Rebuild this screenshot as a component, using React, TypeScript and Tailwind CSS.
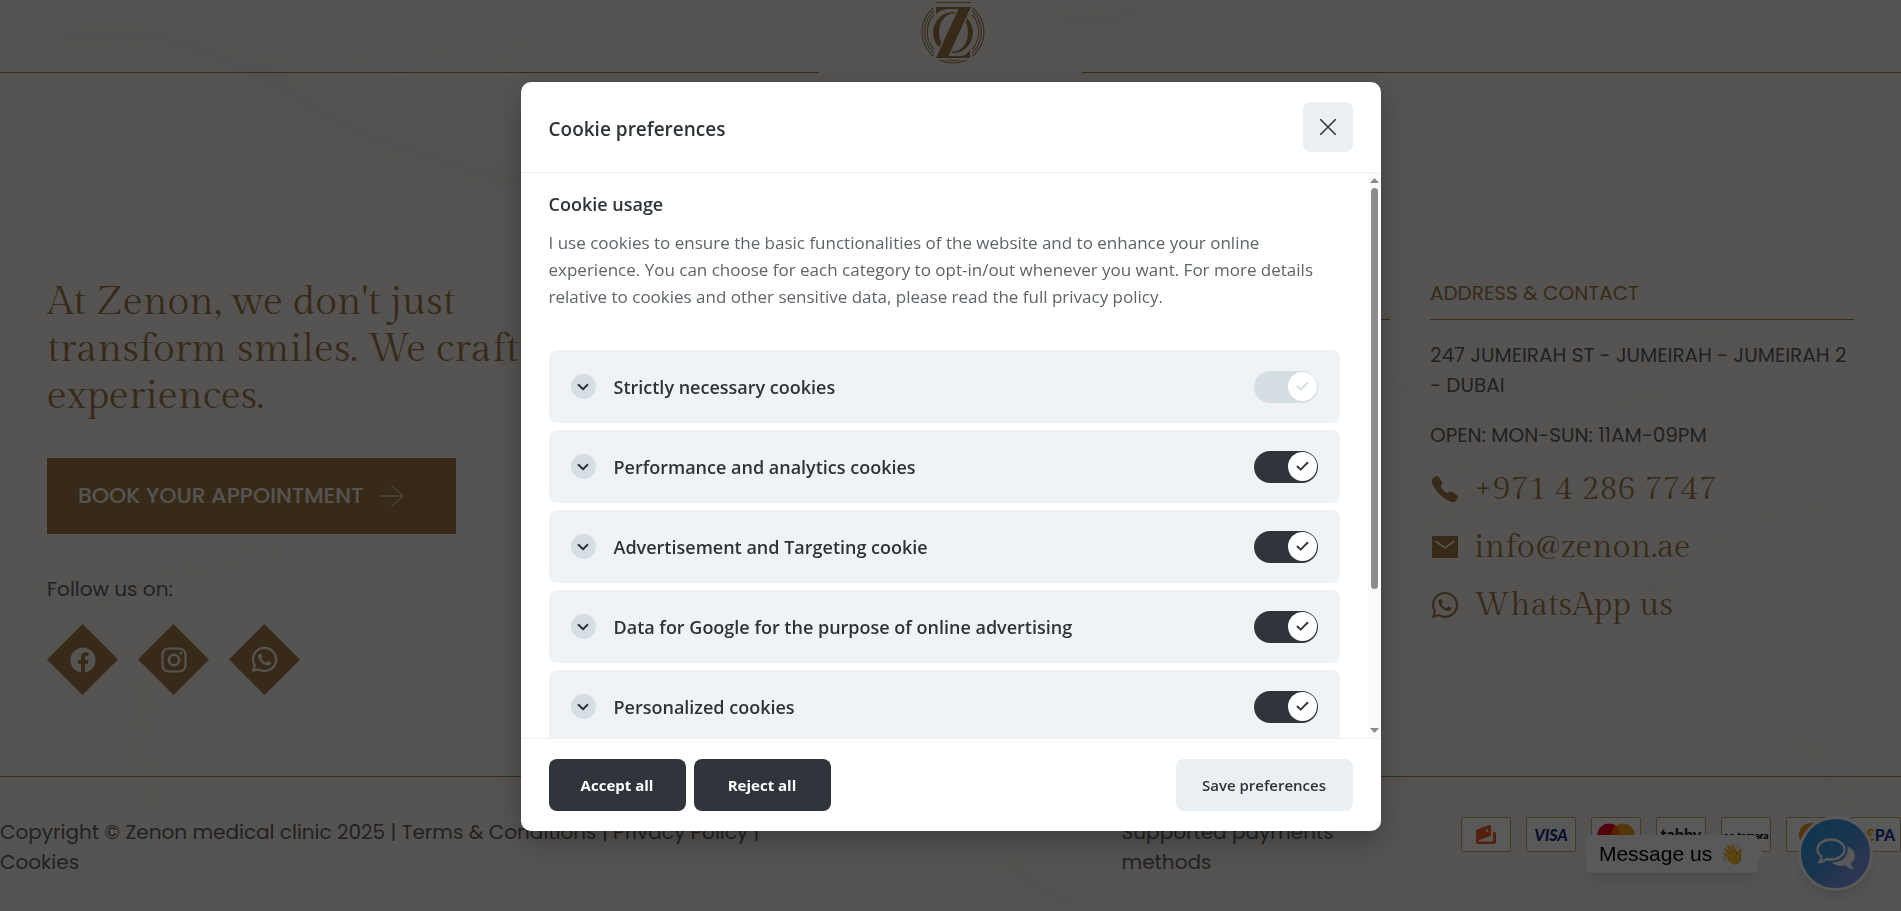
import { useState } from 'react'
import { Check, ChevronDown } from 'lucide-react'
import { FaFacebook, FaWhatsapp } from 'react-icons/fa'
import { IoCall } from 'react-icons/io5'

interface Category {
  id: string
  label: string
  locked?: boolean
}

const CATEGORIES: Category[] = [
  { id: 'necessary', label: 'Strictly necessary cookies', locked: true },
  { id: 'analytics', label: 'Performance and analytics cookies' },
  { id: 'targeting', label: 'Advertisement and Targeting cookie' },
  { id: 'google', label: 'Data for Google for the purpose of online advertising' },
  { id: 'personalized', label: 'Personalized cookies' },
]

function ZenonLogo() {
  return (
    <svg viewBox="0 0 64 64" className="size-16" role="img" aria-label="Zenon">
      <defs>
        <clipPath id="rings">
          <path d="M0 0H13V64H0ZM51 0H64V64H51ZM13 59.5H51V64H13Z" />
        </clipPath>
      </defs>
      <g clipPath="url(#rings)" fill="none" stroke="#9e7a45" strokeWidth="1.1">
        <circle cx="32" cy="32" r="31" />
        <circle cx="32" cy="32" r="28.4" />
        <circle cx="32" cy="32" r="25.8" />
      </g>
      <path d="M15 2.5H50" stroke="#9e7a45" strokeWidth="1" />
      <path
        fill="#9e7a45"
        fillRule="evenodd"
        d="M32 12a20 20.5 0 1 0 0 41a20 20.5 0 1 0 0 -41ZM32.500 13.500a14.500 19 0 1 1 0 38a14.500 19 0 1 1 0 -38Z"
      />
      <path
        d="M15 7H50L27.500 56H40Q47 55 49 49V58H15L37.500 9H26Q17 10 15 15Z"
        fill="#9e7a45"
        stroke="#f6f1ec"
        strokeWidth="3"
        paintOrder="stroke"
      />
    </svg>
  )
}

function InstagramIcon() {
  return (
    <svg viewBox="0 0 26 26" className="size-[26px]" fill="none" stroke="currentColor" aria-hidden="true">
      <rect x="1.5" y="1.500" width="23" height="23" rx="6" strokeWidth="2.200" />
      <circle cx="13" cy="13" r="5.200" strokeWidth="2.600" />
      <circle cx="19.800" cy="6" r="1.500" fill="currentColor" stroke="none" />
    </svg>
  )
}

function MailIcon() {
  return (
    <svg viewBox="0 0 26 22" className="w-[26px] h-[22px]" aria-hidden="true">
      <rect width="26" height="22" fill="currentColor" />
      <path d="M3.500 5L13 12L22.500 5" fill="none" stroke="#f6f1ec" strokeWidth="1.600" />
    </svg>
  )
}

function MarbleVeins() {
  return (
    <svg
      viewBox="0 0 1901 911"
      preserveAspectRatio="none"
      className="absolute inset-0 size-full opacity-10 blur-[6px]"
      fill="none"
      stroke="#98a696"
      strokeWidth="13"
      aria-hidden="true"
    >
      <path d="M60 38C130 28 190 40 230 62C300 90 330 130 400 145C450 165 480 178 540 182" />
      <path d="M260 68C350 75 430 66 520 48" strokeWidth="9" />
      <path d="M1720 330C1660 380 1620 430 1580 450C1520 480 1470 490 1440 530" strokeWidth="8" />
      <path d="M1400 380C1450 440 1480 490 1540 500C1600 510 1620 560 1650 590C1720 560 1760 520 1820 505" strokeWidth="9" />
      <path d="M95 600C140 590 180 560 280 550" strokeWidth="7" />
      <path d="M145 680C142 730 150 770 152 810" strokeWidth="6" />
      <path d="M1060 20C1090 30 1110 20 1140 10" />
      <path d="M1000 860C1030 880 1050 900 1090 911" />
      <path d="M1800 740C1830 790 1850 810 1901 820" strokeWidth="8" />
    </svg>
  )
}

const SOCIALS = [
  { name: 'Facebook', icon: <FaFacebook size={26} /> },
  { name: 'Instagram', icon: <InstagramIcon /> },
  { name: 'WhatsApp', icon: <FaWhatsapp size={29} /> },
]

const CONTACTS = [
  { text: '+971 4 286 7747', href: 'tel:+97142867747', icon: <IoCall size={30} /> },
  { text: 'info@zenon.ae', href: 'mailto:info@zenon.ae', icon: <MailIcon /> },
  { text: 'WhatsApp us', href: '#whatsapp', icon: <FaWhatsapp size={30} /> },
]

function PaymentCard({ children }: { children: React.ReactNode }) {
  return (
    <li className="flex h-[35px] w-[50px] items-center justify-center overflow-hidden rounded-xs border border-[#c4a77d] bg-white">
      {children}
    </li>
  )
}

function Payments() {
  return (
    <ul className="flex shrink-0 gap-[15px] font-['Lato',sans-serif]">
      <PaymentCard>
        <svg viewBox="0 0 20 20" className="size-5" fill="#f0602c" aria-label="Wallet">
          <path d="M0 6Q0 5 1 4.600L13 0Q15 -.5 15 1.500V10Q15 11 14 11.500L3 15.500V16.500H16Q17 16.500 17 15.500V7H18.500Q20 7 20 8.500V17Q20 19 18 19H2Q0 19 0 17Z" />
          <circle cx="11" cy="5.500" r="1.300" fill="#fff" />
          <path d="M3 15.800L14 11.800Q15.500 11 15.500 9.500V6" fill="none" stroke="#fff" strokeWidth="1" />
        </svg>
      </PaymentCard>
      <PaymentCard>
        <span className="text-base font-black italic text-[#1a2a80]">VISA</span>
      </PaymentCard>
      <PaymentCard>
        <svg viewBox="0 0 38 24" className="h-6 w-[38px]" aria-label="Mastercard">
          <circle cx="12" cy="12" r="11.500" fill="#eb001b" />
          <circle cx="26" cy="12" r="11.500" fill="#f79e1b" />
          <path d="M19 3A11.500 11.500 0 0 1 19 21A11.500 11.500 0 0 1 19 3Z" fill="#ff5f00" />
        </svg>
      </PaymentCard>
      <PaymentCard>
        <span className="text-base leading-4 font-black text-[#292929]">tabby</span>
      </PaymentCard>
      <PaymentCard>
        <span className="text-[10px] font-black whitespace-nowrap text-black">•• tamara</span>
      </PaymentCard>
      <PaymentCard>
        <span className="size-6 rounded-full bg-[#f7931a]" />
      </PaymentCard>
      <PaymentCard>
        <span className="text-base font-black text-[#1a3a9a]">
          S<span className="text-[#e6b800]">€</span>PA
        </span>
      </PaymentCard>
    </ul>
  )
}

function ChatWidget() {
  return (
    <div className="fixed right-7 bottom-5 flex items-center gap-10">
      <p className="relative rounded-md bg-white px-[13px] py-1 font-['Liberation_Sans',sans-serif] text-[21px] text-black shadow-lg">
        Message us <span className="ml-0.5 text-xl">👋</span>
        <span className="absolute top-1/2 -right-1 size-3 -translate-y-1/2 rotate-45 bg-white" />
      </p>
      <button
        aria-label="Open chat"
        className="flex size-[75px] items-center justify-center rounded-full border-3 border-white bg-linear-to-br from-[#1fa0dc] via-[#4596e0] to-[#a39af0] text-white shadow-lg"
      >
        <svg viewBox="0 0 40 32" className="h-8 w-10" aria-hidden="true">
          <path
            d="M15 1.500C22.500 1.500 28.500 6 28.500 11.500S22.500 21.500 15 21.500Q12.500 21.500 10.500 21Q7.500 24 3.500 24Q6 21.500 5.500 18.500Q1.500 15.500 1.500 11.500C1.500 6 7.500 1.500 15 1.500Z"
            fill="none"
            stroke="currentColor"
            strokeWidth="2.400"
          />
          <path
            d="M31.500 8Q39 12 39 18Q39 22 35 25Q35 28.500 38 31Q33 31 29.500 27.500Q21 29 15.500 24.500Q31 24 31.500 12Z"
            fill="currentColor"
          />
        </svg>
      </button>
    </div>
  )
}

function SiteFooter() {
  return (
    <div className="relative min-h-screen overflow-hidden bg-[#f6f1ec] font-['Poppins','Inter',sans-serif] text-xl leading-[30px] text-[#5c6065]">
      <MarbleVeins />

      <div className="relative flex items-end">
        <div className="flex-1 border-b border-[#9e7a45]" />
        <div className="flex h-[73px] w-[263px] justify-center pl-1">
          <ZenonLogo />
        </div>
        <div className="flex-1 border-b border-[#9e7a45]" />
      </div>

      <footer className="relative">
        <div className="grid grid-cols-[minmax(0,1fr)_424px_424px] gap-10 border-b border-[#9e7a45] px-[47px] pt-[205px] pb-[81px]">
          <div>
            <h2 className="max-w-[500px] font-['Gilda_Display','Liberation_Serif',serif] text-[40px] leading-[47px] text-[#9e7a45]">
              At Zenon, we don't just transform smiles. We craft experiences.
            </h2>
            <a
              href="#book"
              className="mt-[39px] flex h-[76px] w-[409px] items-center gap-4 bg-[#9e7a45] px-[31px] text-[22px] font-medium whitespace-nowrap text-[#f6f1ec]"
            >
              BOOK YOUR APPOINTMENT
              <svg viewBox="0 0 24 24" className="size-6" fill="none" stroke="currentColor" aria-hidden="true">
                <path d="M0 12H23M12.500 1L23.500 12L12.500 23" />
              </svg>
            </a>
            <p className="mt-10">Follow us on:</p>
            <div className="mt-5 flex gap-5">
              {SOCIALS.map(({ name, icon }) => (
                <a
                  key={name}
                  href={`#${name.toLowerCase()}`}
                  aria-label={name}
                  className="flex size-[71px] items-center justify-center bg-[#9e7a45] text-[#f6f1ec] [clip-path:polygon(50%_0,100%_50%,50%_100%,0_50%)]"
                >
                  {icon}
                </a>
              ))}
            </div>
          </div>

          <div>
            <div className="h-[42px] border-b border-[#9e7a45]" />
          </div>

          <div>
            <h3 className="border-b border-[#9e7a45] pb-[11px] text-[#9e7a45]">ADDRESS &amp; CONTACT</h3>
            <p className="mt-5">247 JUMEIRAH ST - JUMEIRAH - JUMEIRAH 2 - DUBAI</p>
            <p className="mt-5">OPEN: MON-SUN: 11AM-09PM</p>
            <ul className="mt-2.5 text-[#9e7a45]">
              {CONTACTS.map(({ text, href, icon }) => (
                <li key={text}>
                  <a href={href} className="flex h-[58px] items-center gap-3.5">
                    <span className="flex w-[30px] justify-center">{icon}</span>
                    <span className="font-['Gilda_Display','Liberation_Serif',serif] text-[33px] leading-10">{text}</span>
                  </a>
                </li>
              ))}
            </ul>
          </div>
        </div>

        <div className="flex items-start pt-10">
          <p className="w-[59%] pr-[340px]">
            Copyright © Zenon medical clinic 2025 | <a href="#terms">Terms &amp; Conditions</a> |{' '}
            <a href="#privacy">Privacy Policy</a> | <a href="#cookies">Cookies</a>
          </p>
          <p className="w-60">Supported payments methods</p>
          <div className="ml-auto">
            <Payments />
          </div>
        </div>
      </footer>

      <ChatWidget />
    </div>
  )
}

interface ToggleProps {
  label: string
  checked: boolean
  disabled?: boolean
  onChange: () => void
}

function Toggle({ label, checked, disabled, onChange }: ToggleProps) {
  return (
    <label className="relative cursor-pointer">
      <input
        type="checkbox"
        className="peer sr-only"
        aria-label={label}
        checked={checked}
        disabled={disabled}
        onChange={onChange}
      />
      <span className="flex h-8 w-16 items-center rounded-full bg-[#8595a3] p-px text-[#30363c] peer-checked:justify-end peer-checked:bg-[#30353c] peer-disabled:bg-[#d5dee2] peer-disabled:text-[#d5dee2]">
        <span className="flex size-[29px] items-center justify-center rounded-full bg-white">
          {checked && <Check size={15} strokeWidth={3} />}
        </span>
      </span>
    </label>
  )
}

function CookiePreferences({ onClose }: { onClose: () => void }) {
  const [enabled, setEnabled] = useState<string[]>(CATEGORIES.map((c) => c.id))

  const toggle = (id: string) => {
    setEnabled((prev) => (prev.includes(id) ? prev.filter((e) => e !== id) : [...prev, id]))
  }

  const acceptAll = () => setEnabled(CATEGORIES.map((c) => c.id))
  const rejectAll = () => setEnabled(CATEGORIES.filter((c) => c.locked).map((c) => c.id))

  return (
    <div className="fixed inset-0 z-50 flex items-center justify-center bg-black/65 pt-0.5 font-['Segoe_UI','Open_Sans',sans-serif] text-[#2d3338]">
      <div
        role="dialog"
        aria-labelledby="cookie-title"
        className="flex max-h-[calc(100vh-162px)] w-full max-w-[860px] flex-col overflow-hidden rounded-[10px] bg-white shadow-[0_10px_30px_rgba(2,2,3,0.3)]"
      >
        {/* Header */}
        <div className="flex items-center justify-between border-b border-[#eff3f7] px-7 py-5">
          <h2 id="cookie-title" className="pt-1 text-[19px] font-semibold">
            Cookie preferences
          </h2>
          <button
            onClick={onClose}
            aria-label="Close"
            className="flex size-[50px] items-center justify-center rounded-lg bg-[#e9eff2]"
          >
            <svg viewBox="0 0 16 16" className="size-4" fill="none" stroke="currentColor" strokeWidth="1.500">
              <path d="M0 0L16 16M16 0L0 16" />
            </svg>
          </button>
        </div>

        {/* Content */}
        <div className="flex min-h-0 flex-1">
          <div className="flex-1 overflow-y-auto pt-[18px] pr-7 pb-7 pl-7 [scrollbar-width:none]">
            <h3 className="text-lg leading-[27px] font-semibold">Cookie usage</h3>
            <p className="mt-[11px] pr-4 text-[17px] leading-[27px] text-[#5e646a]">
              I use cookies to ensure the basic functionalities of the website and to enhance your online
              experience. You can choose for each category to opt-in/out whenever you want. For more details
              relative to cookies and other sensitive data, please read the full privacy policy.
            </p>
            <div className="mt-10 flex flex-col gap-[7px]">
              {CATEGORIES.map(({ id, label, locked }) => (
                <div key={id} className="flex h-[73px] items-center rounded-lg bg-[#eff3f6] px-[22px]">
                  <button className="flex flex-1 items-center gap-[18px] text-left text-lg font-semibold">
                    <span className="flex size-[25px] items-center justify-center rounded-full bg-[#d5dee2]">
                      <ChevronDown size={18} strokeWidth={2.5} />
                    </span>
                    {label}
                  </button>
                  <Toggle label={label} checked={enabled.includes(id)} disabled={locked} onChange={() => toggle(id)} />
                </div>
              ))}
            </div>
          </div>

          <div className="flex w-[13px] flex-col items-center bg-[#fbfbfb] py-[5px] text-[#8b8b8b]" aria-hidden="true">
            <svg viewBox="0 0 9 5" className="h-[5px] w-[9px]" fill="currentColor">
              <path d="M4.500 0L9 5H0Z" />
            </svg>
            <div className="my-[5px] w-full flex-1">
              <div className="mx-auto h-3/4 w-[7px] rounded-full bg-[#8b8b8b]" />
            </div>
            <svg viewBox="0 0 9 5" className="h-[5px] w-[9px]" fill="currentColor">
              <path d="M4.500 5L0 0H9Z" />
            </svg>
          </div>
        </div>

        {/* Actions */}
        <div className="flex gap-2 border-t border-[#eff3f6] px-7 py-5 text-[15px]">
          <button onClick={acceptAll} className="h-[52px] w-[137px] rounded-lg bg-[#30353c] font-bold text-white">
            Accept all
          </button>
          <button onClick={rejectAll} className="h-[52px] w-[137px] rounded-lg bg-[#30353c] font-bold text-white">
            Reject all
          </button>
          <button onClick={onClose} className="ml-auto h-[52px] w-[177px] rounded-lg bg-[#e9eff2] font-semibold">
            Save preferences
          </button>
        </div>
      </div>
    </div>
  )
}

export default function App() {
  const [open, setOpen] = useState(true)

  return (
    <>
      <SiteFooter />
      {open && <CookiePreferences onClose={() => setOpen(false)} />}
    </>
  )
}
